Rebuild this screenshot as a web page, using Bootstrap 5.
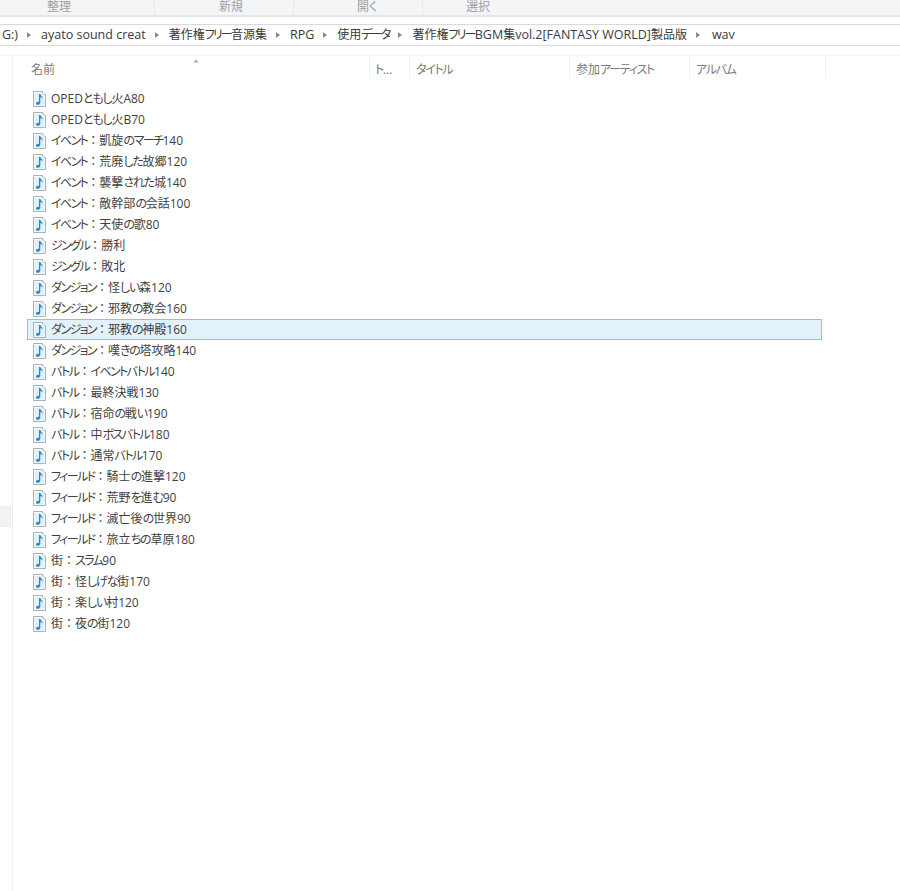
<!DOCTYPE html>
<html lang="ja">
<head>
<meta charset="utf-8">
<title>wav</title>
<link href="https://cdn.jsdelivr.net/npm/bootstrap@5.3.0/dist/css/bootstrap.min.css" rel="stylesheet">
<style>
html,body{height:100%;}
body{font-family:"Open Sans","Noto Sans CJK JP",sans-serif;font-size:12px;color:#333;background:#fff;overflow:hidden;height:891px;font-feature-settings:"palt";}
.tb-bar{height:17px;background:#f4f5f6;border-bottom:2px solid #e4e6e8;overflow:hidden;}
.tb-item{height:15px;line-height:13px;color:#a0a0a0;border-right:1px solid #e6e8ea;}
.tb-1{width:155px;padding-left:47px;}
.tb-2{width:139px;padding-left:64px;}
.tb-3{width:129px;padding-left:63px;}
.tb-4{padding-left:43px;border-right:0;}
.addr{height:22px;margin-top:7px;padding-left:2px;border-top:1px solid #d9d9d9;border-bottom:1px solid #d9d9d9;line-height:20px;color:#3a3a3a;white-space:nowrap;overflow:hidden;font-size:12.5px;}
.crumb-sep{width:0;height:0;border-top:3.5px solid transparent;border-bottom:3.5px solid transparent;border-left:4px solid #8a8a8a;margin:0 10px 0 9px;flex:none;}
.crumb-sep:nth-last-child(2){margin-right:12px;}
.jpsm{font-size:12px;}
.kata{letter-spacing:-1.8px;}
.hira{letter-spacing:-1.2px;}
.frow .kata{letter-spacing:-1.6px;}
.shell{height:846px;margin-top:9px;background:#fff;}
.side{width:13px;border-right:1px solid #f0f0f0;border-top:1px solid #f3f3f3;}
.side-box{height:21px;width:11px;margin-top:450px;background:#f3f3f3;border:1px solid #eeeeee;border-left:0;}
.main{flex:1;min-width:0;}
.head{height:24px;color:#777a7e;position:relative;background:#fff;border-top:1px solid #f3f3f3;}
.hcol{line-height:27px;height:22px;padding-left:5px;border-right:1px solid #eceef0;white-space:nowrap;overflow:hidden;}
.hcol .kata{letter-spacing:-1.3px;}
.hc-name{width:357px;padding-left:18px;}
.hc-t{width:40px;}
.hc-title{width:160px;padding-left:6px;}
.hc-art{width:120px;padding-left:6px;}
.hc-alb{width:136px;padding-left:6px;}
.sort{position:absolute;left:179px;top:2px;width:8px;height:5px;}
.rows{margin:9px 0 0 14px;width:795px;}
.frow{height:21px;padding-left:4px;gap:3px;color:#3f3f3f;white-space:nowrap;border:1px solid transparent;line-height:19px;}
.frow-sel{background:#e2f1fa;border-color:#8cc5da;}
.ficon{width:16px;height:16px;flex:none;}
.wcolon{font-feature-settings:normal;}
</style>
</head>
<body>
<div class="tb-bar d-flex">
  <div class="tb-item tb-1">整理</div>
  <div class="tb-item tb-2">新規</div>
  <div class="tb-item tb-3">開く</div>
  <div class="tb-item tb-4">選択</div>
</div>
<div class="addr d-flex align-items-center" id="addr"></div>
<div class="shell d-flex">
  <div class="side"><div class="side-box"></div></div>
  <div class="main">
    <div class="head d-flex">
      <div class="hcol hc-name">名前</div>
      <div class="hcol hc-t">ト...</div>
      <div class="hcol hc-title">タイトル</div>
      <div class="hcol hc-art">参加アーティスト</div>
      <div class="hcol hc-alb">アルバム</div>
      <svg class="sort" viewBox="0 0 8 5"><path d="M1 4.500 4 1.500l3 3z" fill="#8fb9d2"/></svg>
    </div>
    <div class="rows" id="rows"></div>
  </div>
</div>
<script>
function jp(s){return s.replace(/[ァ-ヶー]+/g,function(m){return '<span class="kata">'+m+'</span>'}).replace(/[ぁ-ん]+/g,function(m){return '<span class="hira">'+m+'</span>'});}
var crumbs=["G:)","ayato sound creat","著作権フリー音源集","RPG","使用データ","著作権フリーBGM集vol.2[FANTASY WORLD]製品版","wav"];
document.getElementById("addr").innerHTML=crumbs.map(function(c){return "<span>"+c.replace(/[一-龠ぁ-んァ-ヶー]+/g,function(m){return '<span class="jpsm">'+jp(m)+'</span>'})+"</span>"}).join('<span class="crumb-sep"></span>');
document.querySelectorAll('.hcol,.tb-item').forEach(function(el){el.innerHTML=jp(el.textContent);});
var files=["OPEDともし火A80","OPEDともし火B70","イベント：凱旋のマーチ140","イベント：荒廃した故郷120","イベント：襲撃された城140","イベント：敵幹部の会話100","イベント：天使の歌80","ジングル：勝利","ジングル：敗北","ダンジョン：怪しい森120","ダンジョン：邪教の教会160","ダンジョン：邪教の神殿160","ダンジョン：嘆きの塔攻略140","バトル：イベントバトル140","バトル：最終決戦130","バトル：宿命の戦い190","バトル：中ボスバトル180","バトル：通常バトル170","フィールド：騎士の進撃120","フィールド：荒野を進む90","フィールド：滅亡後の世界90","フィールド：旅立ちの草原180","街：スラム90","街：怪しげな街170","街：楽しい村120","街：夜の街120"];
var icon='<svg class="ficon" viewBox="0 0 16 16"><path d="M1.500.5h9l3 3v12h-12z" fill="#fff" stroke="#a9b1b8"/><path d="M10.500.5v3h3" fill="#eef1f3" stroke="#a9b1b8"/><rect x="2.500" y="2" width="10" height="12.500" fill="#e2eff8"/><path d="M7 3h1.300c.2 1.700 2.700 2.200 2.200 4.800-.4-1.100-1.200-1.700-2.200-1.900v5.600c0 1.400-1.400 2.300-2.800 2.300-1 0-1.500-.6-1.500-1.300 0-1.200 1.400-2 3-1.800z" fill="#1f8cd0"/></svg>';
document.getElementById("rows").innerHTML=files.map(function(f,i){return '<div class="frow d-flex align-items-center'+(i==11?' frow-sel':'')+'">'+icon+'<span>'+jp(f).replace('：','<span class="wcolon">：</span>')+'</span></div>'}).join("");
</script>
<script src="https://cdn.jsdelivr.net/npm/bootstrap@5.3.0/dist/js/bootstrap.bundle.min.js"></script>
</body>
</html>
